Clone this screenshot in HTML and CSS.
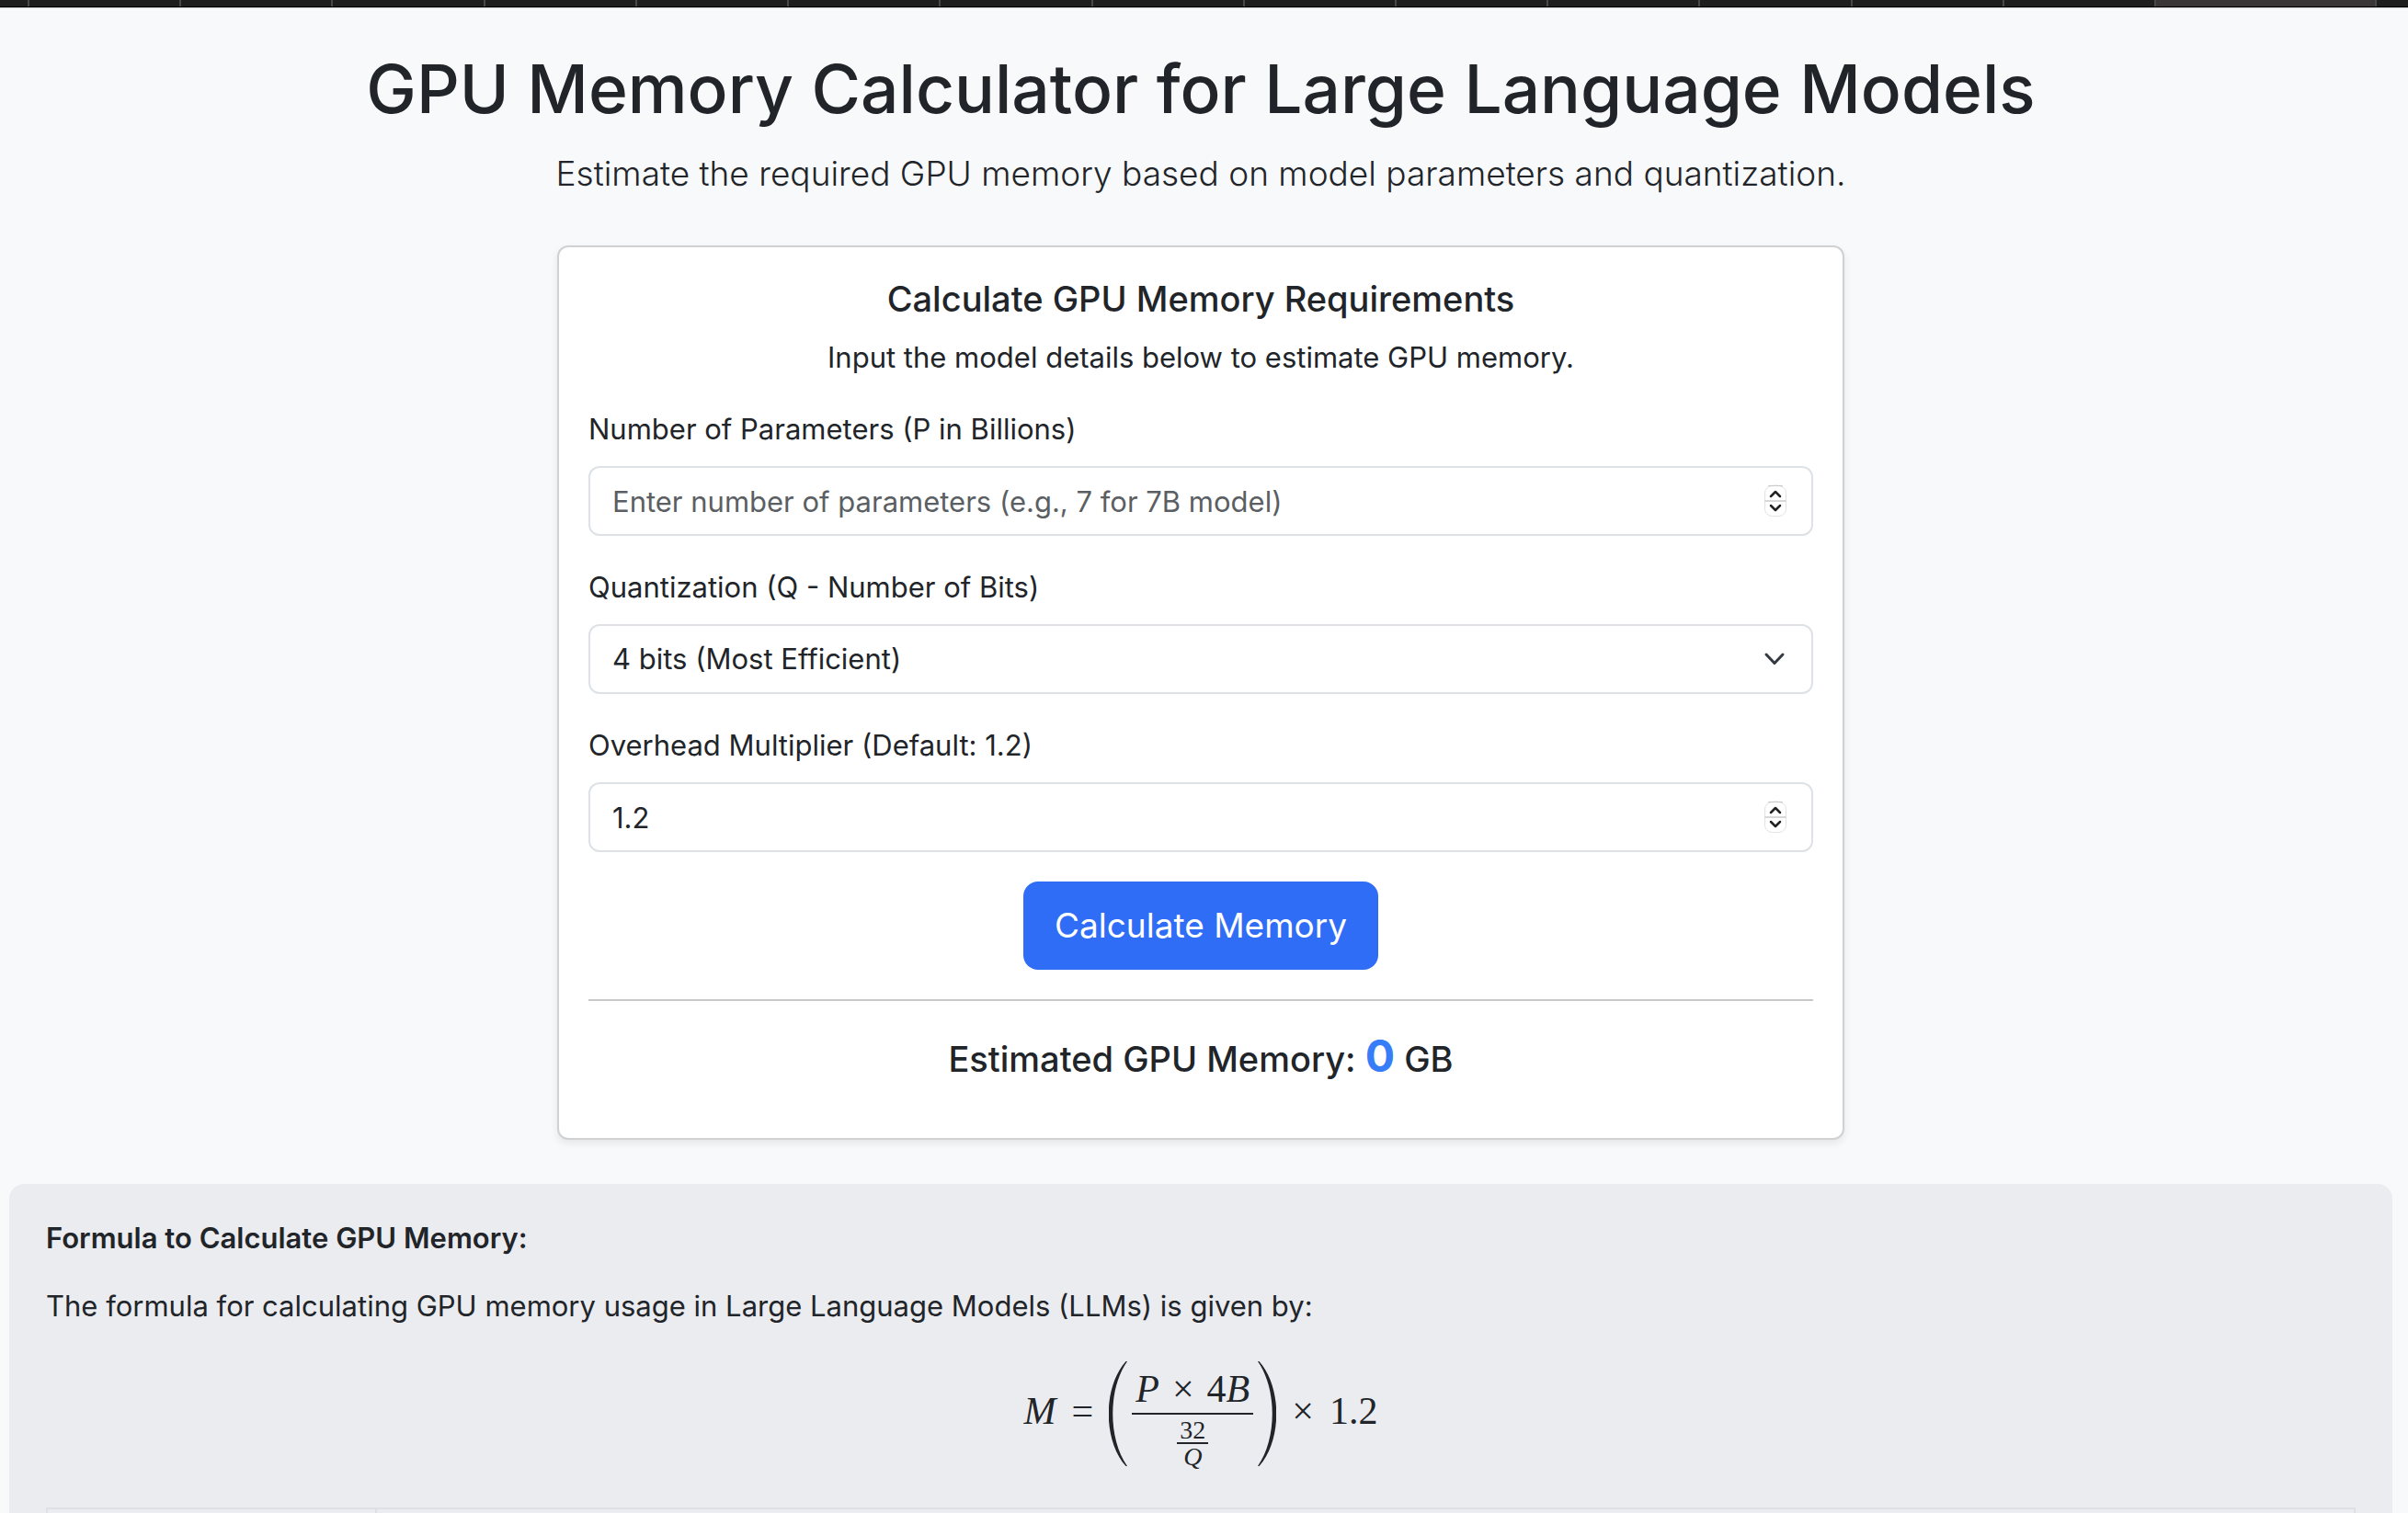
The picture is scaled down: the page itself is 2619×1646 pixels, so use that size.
FILE: index.html
```html
<!DOCTYPE html>
<html lang="en">
<head>
<meta charset="utf-8">
<meta name="viewport" content="width=device-width, initial-scale=1">
<title>GPU Memory Calculator for Large Language Models</title>
<link rel="stylesheet" href="styles.css">
</head>
<body>
<div class="tab-strip" aria-hidden="true">
  <span class="tab-lead"></span>
  <span class="tab"></span><span class="tab"></span><span class="tab"></span><span class="tab"></span><span class="tab"></span><span class="tab"></span><span class="tab"></span>
  <span class="tab"></span><span class="tab"></span><span class="tab"></span><span class="tab"></span><span class="tab"></span><span class="tab"></span><span class="tab"></span>
  <span class="tab tab-active"></span>
  <span class="tab tab-end"></span>
</div>
<main class="page">
  <header class="page-header">
    <h1 class="page-title">GPU Memory Calculator for Large Language Models</h1>
    <p class="lead">Estimate the required GPU memory based on model parameters and quantization.</p>
  </header>

  <section class="card">
    <h2 class="card-title">Calculate GPU Memory Requirements</h2>
    <p class="card-text">Input the model details below to estimate GPU memory.</p>
    <form class="form">
      <div class="field">
        <label class="label" for="parameters">Number of Parameters (P in Billions)</label>
        <input class="control control-number" id="parameters" type="number" placeholder="Enter number of parameters (e.g., 7 for 7B model)">
      </div>
      <div class="field">
        <label class="label" for="quantization">Quantization (Q - Number of Bits)</label>
        <select class="control control-select" id="quantization">
          <option>4 bits (Most Efficient)</option>
        </select>
      </div>
      <div class="field">
        <label class="label" for="overhead">Overhead Multiplier (Default: 1.2)</label>
        <input class="control control-number" id="overhead" type="number" step="0.1" value="1.2">
      </div>
      <button class="button" type="button">Calculate Memory</button>
    </form>
    <hr class="rule">
    <h3 class="result">Estimated GPU Memory: <span class="result-value">0</span> GB</h3>
  </section>

  <section class="formula-panel">
    <h4 class="formula-title">Formula to Calculate GPU Memory:</h4>
    <p class="formula-text">The formula for calculating GPU memory usage in Large Language Models (LLMs) is given by:</p>
    <div class="formula">
      <i class="term">M</i>
      <span class="term">=</span>
      <span class="group">
        <svg class="paren" viewBox="0 0 20 114" aria-hidden="true"><path d="M18.500 0C-6.500 28-6.500 86 18.500 114L20 114C-1 84-1 30 20 0Z"/></svg>
        <span class="fraction outer">
          <span class="numerator"><i>P</i><span>×</span><span>4<i>B</i></span></span>
          <span class="fraction inner">
            <span class="inner-top">32</span>
            <i class="inner-bottom">Q</i>
          </span>
        </span>
        <svg class="paren" viewBox="0 0 20 114" aria-hidden="true"><path d="M1.500 0C26.500 28 26.500 86 1.500 114L0 114C21 84 21 30 0 0Z"/></svg>
      </span>
      <span class="term">×</span>
      <span class="term">1.2</span>
    </div>
    <table class="variables">
      <tbody><tr><td class="symbol"></td><td></td></tr></tbody>
    </table>
  </section>
</main>
</body>
</html>
```

FILE: styles.css
```css
* {
  box-sizing: border-box;
}

html {
  height: 100%;
}

body {
  margin: 0;
  height: 100%;
  overflow: hidden;
  background: #f8f9fb;
  color: #212529;
  font-family: Inter, "Liberation Sans", sans-serif;
  font-size: 31px;
  line-height: 48px;
}

h1, h2, h3, h4, p {
  margin: 0;
}

/* Browser tab edge above the page */
.tab-strip {
  display: flex;
  height: 9px;
  background: #1e1e1e;
  border-bottom: 1px solid #c6c7c8;
  box-shadow: inset 0 -1px #000;
}

.tab-lead {
  width: 30px;
}

.tab {
  flex: 1;
  height: 7px;
  border-left: 2px solid #4a494a;
}

.tab-active {
  flex: 0 0 240px;
  background: #3a3637;
}

.tab-end {
  flex: 0 0 36px;
}

.page {
  padding: 40px 17px 0 10px;
}

.page-header {
  text-align: center;
}

.page-title {
  margin-bottom: 14px;
  font-size: 73px;
  font-weight: 500;
  line-height: 96px;
}

.lead {
  font-size: 37px;
  font-weight: 300;
  line-height: 60px;
}

.card {
  max-width: 1400px;
  margin: 48px auto;
  padding: 32px 32px 58px;
  background: #fff;
  border: 2px solid #d0d1d2;
  border-radius: 12px;
  box-shadow: 0 4px 8px rgba(0, 0, 0, 0.08);
}

.card-title,
.result {
  font-size: 38px;
  font-weight: 500;
  text-align: center;
}

.card-text {
  margin: 16px 0 30px;
  text-align: center;
}

.form {
  display: flex;
  flex-direction: column;
  gap: 32px;
}

.field {
  display: flex;
  flex-direction: column;
  gap: 16px;
}

.control {
  width: 100%;
  height: 76px;
  margin: 0;
  padding: 12px 24px;
  border: 2px solid #dee2e6;
  border-radius: 12px;
  background: #fff no-repeat;
  color: inherit;
  font: inherit;
  appearance: none;
}

.control::placeholder {
  color: #5b5f63;
  opacity: 1;
}

.control-number {
  appearance: textfield;
  background-image: url("data:image/svg+xml,%3Csvg xmlns='http://www.w3.org/2000/svg' width='26' height='36' fill='none'%3E%3Crect x='1.500' y='1.500' width='23' height='33' rx='8' stroke='%23e2e2e2'/%3E%3Cpath d='M5 1.800Q13 .6 21 1.800' stroke='%23c4c4c4'/%3E%3Cpath d='M1 18H25' stroke='%23d8d8d8' stroke-width='2'/%3E%3Cpath d='M8 13L13 8L18 13M8 23L13 28L18 23' stroke='%23222' stroke-width='2.500' stroke-linecap='round' stroke-linejoin='round'/%3E%3C/svg%3E");
  background-position: right 26px center;
}

.control-number::-webkit-inner-spin-button,
.control-number::-webkit-outer-spin-button {
  appearance: none;
  margin: 0;
}

.control-select {
  background-image: url("data:image/svg+xml,%3Csvg xmlns='http://www.w3.org/2000/svg' width='24' height='16' fill='none'%3E%3Cpath d='M3 3L12 12.500L21 3' stroke='%23343a40' stroke-width='3' stroke-linecap='round' stroke-linejoin='round'/%3E%3C/svg%3E");
  background-position: right 28px center;
}

.button {
  align-self: center;
  padding: 18px 34px;
  border: 0;
  border-radius: 16px;
  background: #306df7;
  color: #fff;
  font: inherit;
  font-size: 37px;
  line-height: 60px;
}

.rule {
  height: 2px;
  margin: 32px 0;
  border: 0;
  background: #c7c8c9;
}

.result {
  line-height: 56px;
}

.result-value {
  color: #377df8;
  font-size: 48px;
  font-weight: 700;
}

.formula-panel {
  padding: 35px 40px;
  border-radius: 16px;
  background: #ebecf0;
}

.formula-title {
  margin-bottom: 26px;
  font-size: 31px;
  font-weight: 600;
}

.formula {
  display: flex;
  justify-content: center;
  align-items: center;
  gap: 17px;
  margin: 32px 0 42px;
  font-family: "Liberation Serif", serif;
  font-size: 42px;
  line-height: 40px;
}

.term {
  padding-bottom: 6px;
}

.group {
  display: flex;
  align-items: center;
  gap: 5px;
}

.paren {
  width: 20px;
  height: 114px;
  fill: #212529;
}

.fraction {
  display: flex;
  flex-direction: column;
  align-items: center;
}

.outer {
  padding-top: 14px;
}

.numerator {
  display: flex;
  gap: 14px;
  padding: 0 4px 6px;
  border-bottom: 2px solid #212529;
}

.inner {
  padding-top: 3px;
  font-size: 28px;
  line-height: 27px;
}

.inner-top {
  padding: 0 3px;
  border-bottom: 2px solid #212529;
}

.variables {
  width: 100%;
  border-collapse: collapse;
}

.variables td {
  height: 66px;
  border: 2px solid #dfe0e5;
}

.variables .symbol {
  width: 358px;
}
```
